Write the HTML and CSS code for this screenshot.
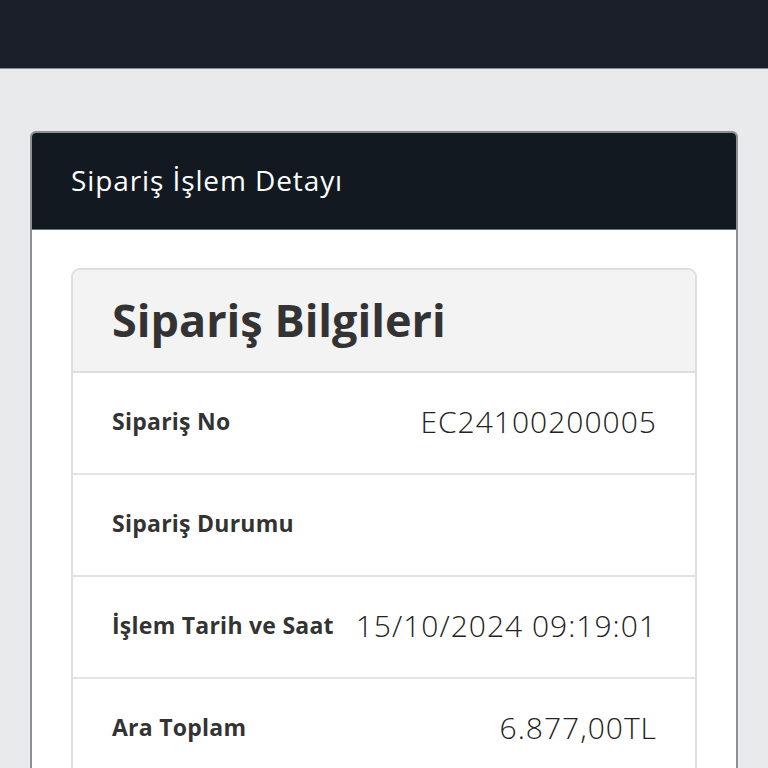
FILE: index.html
```html
<!DOCTYPE html>
<html lang="tr">
<head>
<meta charset="utf-8">
<title>Sipariş İşlem Detayı</title>
<link rel="stylesheet" href="styles.css">
</head>
<body>
<header class="topbar"></header>
<main class="page">
  <section class="panel">
    <div class="panel-head">Sipariş İşlem Detayı</div>
    <div class="panel-body">
      <div class="info-card">
        <div class="info-head">Sipariş Bilgileri</div>
        <div class="info-row">
          <span class="label">Sipariş No</span>
          <span class="value">EC24100200005</span>
        </div>
        <div class="info-row">
          <span class="label">Sipariş Durumu</span>
          <span class="value"></span>
        </div>
        <div class="info-row">
          <span class="label">İşlem Tarih ve Saat</span>
          <span class="value">15/10/2024 09:19:01</span>
        </div>
        <div class="info-row">
          <span class="label">Ara Toplam</span>
          <span class="value">6.877,00TL</span>
        </div>
      </div>
    </div>
  </section>
</main>
</body>
</html>
```

FILE: styles.css
```css
* { box-sizing: border-box; }
html, body {
  margin: 0;
  padding: 0;
  background: #e9eaec;
  font-family: "Open Sans", "Noto Sans", sans-serif;
  height: 768px;
  overflow: hidden;
}
.topbar {
  height: 69px;
  background: #1b1f2a;
  border-bottom: 1px solid #8a8d93;
}
.page {
  padding: 62px 30px 0 30px;
}
.panel {
  border: 2px solid #8c8f94;
  border-bottom: none;
  border-radius: 6px 6px 0 0;
  background: #fff;
  overflow: hidden;
}
.panel-head {
  background: #131920;
  color: #fff;
  height: 97px;
  padding-left: 39px;
  padding-bottom: 2px;
  display: flex;
  align-items: center;
  font-size: 28px;
  letter-spacing: 0.9px;
  font-weight: 400;
  border-bottom: 1px solid #6f7378;
}
.panel-body {
  padding: 38px 39px 0 39px;
}
.info-card {
  border: 2px solid #dedede;
  border-radius: 9px;
  overflow: hidden;
}
.info-head {
  background: #f3f3f3;
  height: 103px;
  padding-left: 39px;
  padding-bottom: 2px;
  display: flex;
  align-items: center;
  font-size: 45px;
  font-weight: 700;
  color: #333;
  border-bottom: 2px solid #dedede;
}
.info-row {
  height: 102px;
  display: flex;
  align-items: center;
  justify-content: space-between;
  padding: 0 38px 4px 39px;
  border-bottom: 2px solid #e3e3e3;
}
.label {
  font-size: 23px;
  font-weight: 700;
  letter-spacing: 0.25px;
  color: #333;
}
.value {
  font-size: 30px;
  font-weight: 300;
  letter-spacing: 1px;
  color: #222;
}
```
